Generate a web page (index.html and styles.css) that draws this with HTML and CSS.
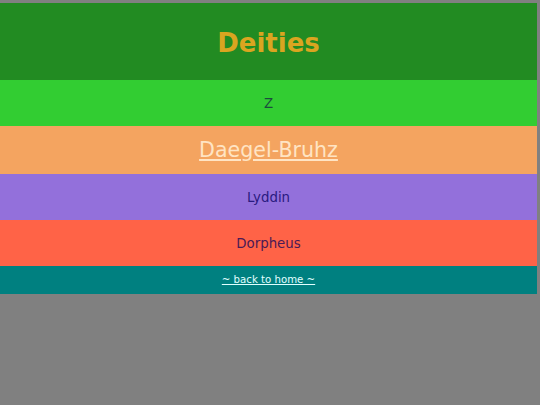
FILE: index.html
```html
<!DOCTYPE html>
<html lang="en">

<head>
    <meta charset="UTF-8">
    <meta name="viewport" content="width=device-width, initial-scale=1.0">
    <title>Deities</title>
    <link rel="stylesheet" href="styles.css">
</head>

<body>
    <!-- Page header -->
    <div class="header">
        <h1>Deities</h1>
    </div>

    <!-- Deity list -->
    <div class="deities">
        <div class="deity deity-z">Z</div>
        <div class="deity deity-daegel"><a href="#">Daegel-Bruhz</a></div>
        <div class="deity deity-lyddin">Lyddin</div>
        <div class="deity deity-dorpheus">Dorpheus</div>
    </div>

    <!-- Footer -->
    <div class="footer">
        <a href="#">~ back to home ~</a>
    </div>
</body>

</html>
```

FILE: styles.css
```css
body {
    font-family: "DejaVu Sans", Verdana, sans-serif;
    background-color: #808080;
    margin: 3px 3px 0 0;
    padding: 0;
}

/* Header */
.header {
    background-color: #228b22;
    text-align: center;
    padding: 25px 0 21px;
}

h1 {
    margin: 0;
    font-size: 26px;
    line-height: 31px;
    color: #daa520;
}

/* Deity rows */
.deity {
    text-align: center;
    font-size: 13.33px;
    line-height: 16px;
    padding: 16px 0 14px;
}

.deity-z {
    background-color: #32cd32;
    color: #1b4d3e;
}

.deity-daegel {
    background-color: #f4a460;
    font-size: 20.6px;
    line-height: 24px;
    padding: 12px 0;
}

.deity-daegel a {
    color: #ffe4c4;
}

.deity-lyddin {
    background-color: #9370db;
    color: #2a1a80;
}

.deity-dorpheus {
    background-color: #ff6347;
    color: #4b1a55;
}

/* Footer */
.footer {
    background-color: #008080;
    text-align: center;
    font-size: 10.2px;
    line-height: 14px;
    padding: 7px 0;
}

.footer a {
    color: #e0ffff;
}
```
